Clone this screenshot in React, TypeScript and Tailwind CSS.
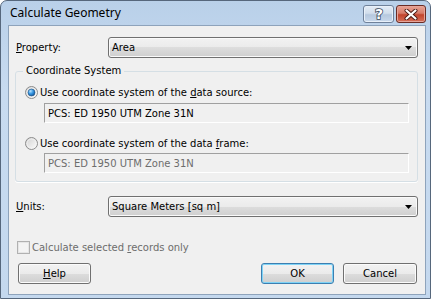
import React from "react";

const font = { fontFamily: '"DejaVu Sans", Tahoma, sans-serif' };

function Arrow() {
  return (
    <svg width="7" height="4" viewBox="0 0 7 4" className="block">
      <path d="M0 0 H7 L3.5 4 Z" fill="#000" />
    </svg>
  );
}

function Dropdown({ text }: { text: string }) {
  return (
    <div className="w-[310px] h-[21px] rounded-[3px] border border-[#707070] flex items-center pl-[3px] pr-[5px] shadow-[inset_0_0_0_1px_#fafafa] bg-[linear-gradient(to_bottom,#f2f2f2_0%,#ebebeb_50%,#dddddd_50%,#cfcfcf_100%)]">
      <span className="flex-1 text-[10px] text-black leading-none">{text}</span>
      <Arrow />
    </div>
  );
}

function Radio({ checked }: { checked: boolean }) {
  return (
    <svg width="13" height="13" viewBox="0 0 13 13" className="block shrink-0">
      <defs>
        <linearGradient id={checked ? "rgA" : "rgB"} x1="0" y1="0" x2="1" y2="1">
          <stop offset="0" stopColor="#cfcfcf" />
          <stop offset="1" stopColor="#ffffff" />
        </linearGradient>
        <radialGradient id="dot" cx="0.35" cy="0.3" r="0.8">
          <stop offset="0" stopColor="#b8e4ff" />
          <stop offset="0.45" stopColor="#3c9be6" />
          <stop offset="1" stopColor="#0b4f94" />
        </radialGradient>
      </defs>
      <circle cx="6.5" cy="6.5" r="6" fill={`url(#${checked ? "rgA" : "rgB"})`} stroke="#8c8c8c" strokeWidth="1" />
      <circle cx="6.5" cy="6.5" r="4.5" fill="none" stroke="#f4f4f4" strokeWidth="1" opacity="0.7" />
      {checked && <circle cx="6.5" cy="6.5" r="3.5" fill="url(#dot)" stroke="#1d4f80" strokeWidth="0.6" />}
    </svg>
  );
}

function Button({ children, w, def }: { children: React.ReactNode; w: string; def?: boolean }) {
  return (
    <div
      className={`${w} h-[21px] rounded-[3px] border flex items-center justify-center text-[10px] text-black ${
        def
          ? "border-[#3c7fb1] shadow-[inset_0_0_0_1px_#7fd3f6]"
          : "border-[#707070] shadow-[inset_0_0_0_1px_#fbfbfb]"
      } bg-[linear-gradient(to_bottom,#f2f2f2_0%,#ebebeb_50%,#dddddd_50%,#cfcfcf_100%)]`}
    >
      {children}
    </div>
  );
}

function TextBox({ text, disabled }: { text: string; disabled?: boolean }) {
  return (
    <div
      className={`w-[365px] h-[20px] border border-t-[#a0a0a0] border-l-[#a0a0a0] border-b-white border-r-white flex items-center pl-[3px] text-[10px] bg-[#f0f0f0] ${
        disabled ? "text-[#6d6d6d]" : "text-black"
      }`}
    >
      {text}
    </div>
  );
}

export default function App() {
  return (
    <div className="w-[431px] h-[299px] bg-white">
      <div className="w-[431px] h-[299px] border border-[#56677c] rounded-t-[7px] overflow-hidden flex flex-col bg-[linear-gradient(to_bottom,#b9d0e9,#c8dbf0_30%,#c4d8ee)]">
        {/* title bar */}
        <div className="h-[24px] shrink-0 flex items-center relative">
          <span className="pl-[9px] text-[12px] text-black" style={{ fontFamily: '"Noto Sans", "Open Sans", sans-serif' }}>
            Calculate Geometry
          </span>
          <div className="ml-auto mr-[4px] flex gap-[2px] mt-[2px]">
            <div className="w-[31px] h-[18px] rounded-[3px] border border-[#6f819a] shadow-[inset_0_0_0_1px_#e8f0f9] bg-[linear-gradient(to_bottom,#e4ecf6_0%,#d2deec_45%,#b6c8de_55%,#c9d9ec_100%)] flex items-center justify-center">
              <svg width="12" height="14" viewBox="0 0 12 14">
                <text
                  x="6"
                  y="12"
                  textAnchor="middle"
                  fontSize="14"
                  fontWeight="bold"
                  fontFamily="DejaVu Sans, sans-serif"
                  fill="#ffffff"
                  stroke="#3a4a5e"
                  strokeWidth="1.6"
                  paintOrder="stroke"
                >
                  ?
                </text>
              </svg>
            </div>
            <div className="w-[30px] h-[18px] rounded-[3px] border border-[#6b2c24] shadow-[inset_0_0_0_1px_#e5a499] bg-[linear-gradient(to_bottom,#e8a394_0%,#d77c6a_45%,#c2442d_55%,#d5705a_100%)] flex items-center justify-center">
              <svg width="14" height="11" viewBox="0 0 14 11">
                <path d="M2.5 1.5 L11.5 9.5 M11.5 1.5 L2.5 9.5" stroke="#4a1a14" strokeWidth="4" strokeLinecap="round" />
                <path d="M2.5 1.5 L11.5 9.5 M11.5 1.5 L2.5 9.5" stroke="#ffffff" strokeWidth="2.2" strokeLinecap="round" />
              </svg>
            </div>
          </div>
        </div>
        {/* client */}
        <div className="flex-1 ml-[7px] mr-[4px] mb-[3px] border border-[#8ea3bb] bg-[#f0f0f0] flex flex-col" style={font}>
          {/* Property row */}
          <div className="mt-[11px] flex items-center pl-[7px]">
            <span className="w-[92px] text-[10px] text-black">
              <u>P</u>roperty:
            </span>
            <Dropdown text="Area" />
          </div>
          {/* Group */}
          <fieldset className="mt-[6px] ml-[6px] w-[403px] border border-[#d5dfe5] rounded-[3px] pb-[8px] shadow-[0_1px_0_0_#ffffff]">
            <legend className="ml-[7px] px-[3px] text-[10px] leading-[14px] text-black">Coordinate System</legend>
            <div className="mt-[8px] ml-[9px] flex items-center gap-[2px] h-[13px]">
              <Radio checked />
              <span className="text-[10px] text-black leading-none">
                Use coordinate system of the <u>d</u>ata source:
              </span>
            </div>
            <div className="mt-[4px] ml-[28px]">
              <TextBox text="PCS: ED 1950 UTM Zone 31N" />
            </div>
            <div className="mt-[14px] ml-[9px] flex items-center gap-[2px] h-[13px]">
              <Radio checked={false} />
              <span className="text-[10px] text-black leading-none">
                Use coordinate system of the data <u>f</u>rame:
              </span>
            </div>
            <div className="mt-[3px] ml-[28px]">
              <TextBox text="PCS: ED 1950 UTM Zone 31N" disabled />
            </div>
          </fieldset>
          {/* Units row */}
          <div className="mt-[14px] flex items-center pl-[7px]">
            <span className="w-[92px] text-[10px] text-black">
              <u>U</u>nits:
            </span>
            <Dropdown text="Square Meters [sq m]" />
          </div>
          {/* checkbox */}
          <div className="mt-[24px] ml-[8px] flex items-center gap-[2px] h-[13px]">
            <div className="w-[13px] h-[13px] border border-[#b1b1b1] bg-[#f4f4f4] shadow-[inset_0_0_0_1px_#e6e6e6]" />
            <span className="text-[10px] text-[#6d6d6d] leading-none">
              Calculate selected <u>r</u>ecords only
            </span>
          </div>
          {/* buttons */}
          <div className="mt-[9px] flex items-center pl-[9px] pr-[8px]">
            <Button w="w-[73px]">
              <span>
                <u>H</u>elp
              </span>
            </Button>
            <div className="ml-auto flex gap-[9px]">
              <Button w="w-[73px]" def>
                OK
              </Button>
              <Button w="w-[74px]">Cancel</Button>
            </div>
          </div>
        </div>
      </div>
    </div>
  );
}
